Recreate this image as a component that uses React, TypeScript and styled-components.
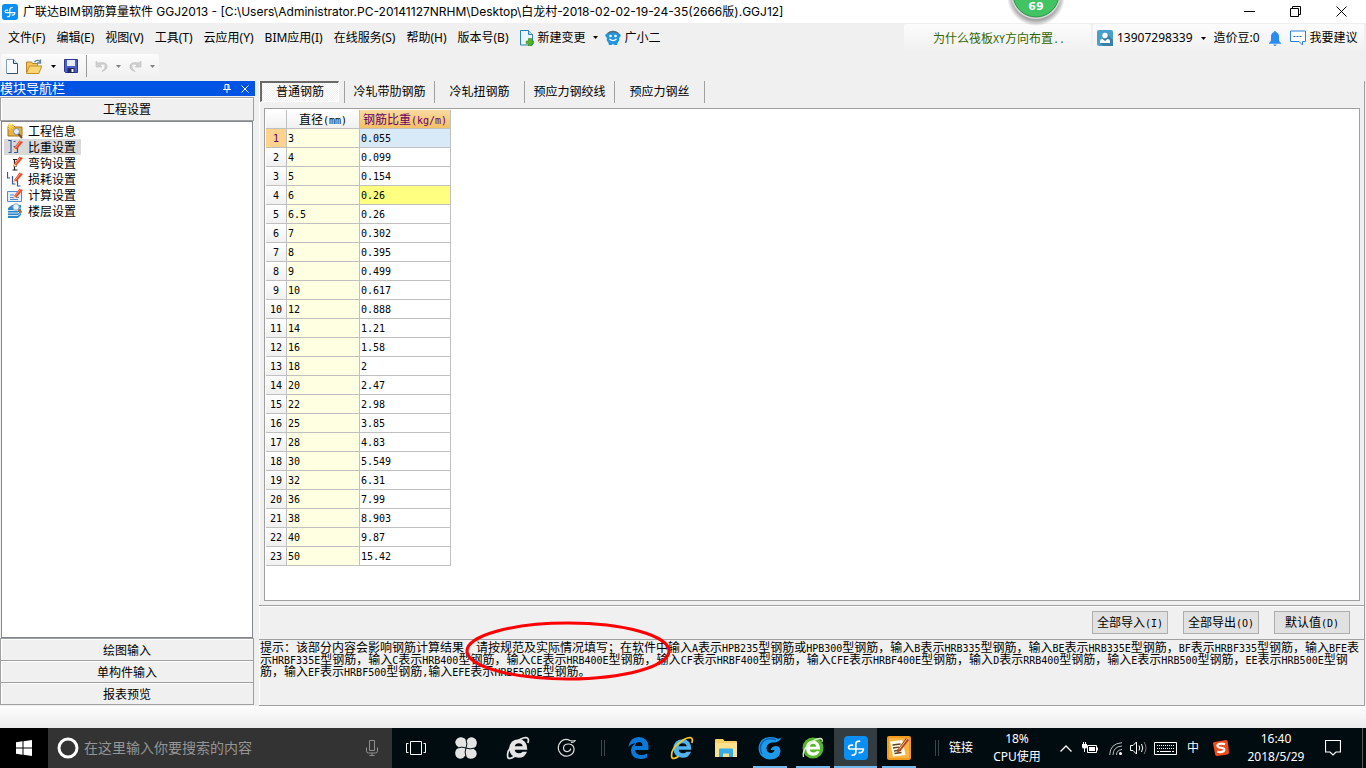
import React from 'react';
import styled, { createGlobalStyle, css } from 'styled-components';

const ui = '"Noto Sans", "Open Sans", "Noto Sans CJK SC", sans-serif';
const song = '"Noto Sans CJK SC", "Liberation Sans", sans-serif';

const GlobalStyle = createGlobalStyle`
  *, *::before, *::after { box-sizing: border-box; }
  body { margin: 0; background: #f0f0f0; color: #000; font: 12px/16px ${song}; }
  button, input { font: inherit; color: inherit; }
  svg { display: block; flex: none; }
`;

const PlainButton = styled.button`
  display: flex;
  align-items: center;
  padding: 0;
  border: 0;
  background: none;
  white-space: nowrap;
`;

const Page = styled.div`
  display: flex;
  flex-direction: column;
  min-height: 100vh;
`;

/* ---------- half-width latin runs ---------- */

const Half = styled.span`
  font-family: "DejaVu Sans Mono", monospace;
  font-size: 10px;
  line-height: 0;
  white-space: pre;
`;

function Mixed({ text }: { text: string }) {
  return (
    <>
      {text.split(/([\x20-\x7e]+)/).map((part, i) => (i % 2 ? <Half key={i}>{part}</Half> : part))}
    </>
  );
}

/* ---------- title bar ---------- */

const TitleBar = styled.header`
  position: relative;
  display: flex;
  align-items: center;
  height: 23px;
  padding: 0 2px;
  background: #fff;
`;

const Title = styled.h1`
  flex: 1;
  margin: 0 0 0 5px;
  font: 400 12px/23px Inter, "Noto Sans CJK SC", sans-serif;
  white-space: nowrap;
`;

const WindowButton = styled(PlainButton)`
  justify-content: center;
  width: 46px;
  height: 22px;
`;

const Ball = styled.div`
  position: absolute;
  top: 0;
  right: 300px;
  z-index: 2;
`;

const BallCount = styled.span`
  position: absolute;
  top: 0;
  left: 0;
  width: 100%;
  text-align: center;
  color: #fff;
  font: bold 11px/14px "DejaVu Sans", sans-serif;
`;

/* ---------- menu ---------- */

const MenuRow = styled.div`
  display: flex;
  justify-content: space-between;
  height: 29px;
  margin-bottom: 1px;
  padding-right: 2px;
  font-family: ${ui};
`;

const Menu = styled.nav`
  display: flex;
  align-items: center;
  gap: 11px;
  padding-left: 8px;
`;

const MenuItem = styled(PlainButton)`
  gap: 4px;
`;

const MenuExtras = styled.div`
  display: flex;
  align-items: center;
  gap: 7px;
`;

const Account = styled.div`
  display: flex;
  gap: 2px;
  padding-top: 1px;
`;

const soft = css`
  border-radius: 3px;
  background: linear-gradient(#fcfcfc, #f0f0f0);
`;

const Promo = styled.a`
  ${soft}
  display: block;
  width: 187px;
  padding: 0 29px;
  color: #336600;
  font-family: ${song};
  line-height: 27px;
  text-decoration: none;
  white-space: nowrap;
`;

const UserBox = styled.div`
  ${soft}
  display: flex;
  align-items: center;
  gap: 8px;
  width: 271px;
  padding: 0 4px;
`;

/* ---------- toolbar ---------- */

const Toolbar = styled.div`
  ${soft}
  display: flex;
  align-items: center;
  gap: 8px;
  width: 158px;
  height: 24px;
  margin: 1px 0 3px 1px;
  padding-left: 5px;
`;

const ToolSep = styled.span`
  width: 1px;
  height: 22px;
  background: #999;
`;

/* ---------- workspace ---------- */

const Workspace = styled.div`
  display: flex;
  flex: 1;
  gap: 4px;
  padding-right: 1px;
`;

const Sidebar = styled.aside`
  display: flex;
  flex-direction: column;
  width: 255px;
  padding-bottom: 1px;
`;

const SideTitle = styled.div`
  display: flex;
  align-items: center;
  height: 15px;
  padding-right: 1px;
  background: #0054e3;
  color: #fff;
  line-height: 14px;
`;

const SideName = styled.span`
  flex: 1;
  padding-bottom: 2px;
  font-size: 13px;
`;

const SideTool = styled(PlainButton)`
  justify-content: center;
  width: 18px;
`;

const SideSection = styled.button<{ $first?: boolean }>`
  width: 254px;
  height: ${(p) => (p.$first ? 24 : 22)}px;
  margin-top: ${(p) => (p.$first ? 1 : 0)}px;
  padding: 0;
  border: solid #a0a0a0;
  border-width: ${(p) => (p.$first ? '1px' : '0 1px 1px')};
  background: #f0f0f0;
  box-shadow: inset 1px 1px #fff;
  line-height: 20px;
`;

const Tree = styled.ul`
  flex: 1;
  width: 252px;
  margin: 0 0 0 1px;
  padding: 1px 2px;
  border: 1px solid #828790;
  background: #fff;
  list-style: none;
`;

const TreeBottom = styled.div`
  width: 254px;
  height: 1px;
  background: #a0a0a0;
`;

const TreeItem = styled(PlainButton)<{ $active?: boolean }>`
  gap: 5px;
  height: 16px;
  padding: 0 5px 0 3px;
  background: ${(p) => (p.$active ? '#d9d9d9' : 'none')};
  line-height: 16px;
`;

const Main = styled.main`
  display: flex;
  flex: 1;
  flex-direction: column;
  min-width: 0;
  border: solid #a0a0a0;
  border-width: 0 1px 1px 0;
  box-shadow: inset 1px 0 #fff;
`;

const Tabs = styled.div`
  display: flex;
  height: 22px;
  padding-left: 1px;
`;

const TabCell = styled.div<{ $first?: boolean }>`
  display: flex;
  width: ${(p) => (p.$first ? 85 : 90)}px;
  padding: 0 ${(p) => (p.$first ? 5 : 0)}px 1px 0;
  border-right: 1px solid #a0a0a0;
`;

const Tab = styled.button<{ $active?: boolean }>`
  flex: 1;
  padding: 0 0 2px;
  border: 0;
  background: none;
  line-height: 18px;
  ${(p) =>
    p.$active &&
    css`
      border: solid #696969;
      border-width: 2px 1px 1px 2px;
      border-right-color: #fff;
      border-bottom-color: #fff;
      background: repeating-conic-gradient(#fff 0 25%, #f0f0f0 0 50%) 0 0 / 2px 2px;
      line-height: 16px;
    `}
`;

const SheetArea = styled.div`
  flex: 1;
  margin: 5px 4px 4px 5px;
  padding: 1px;
  border: 1px solid #a0a0a0;
  background: #fff;
`;

const Sheet = styled.table`
  border-collapse: separate;
  border-spacing: 0;
  table-layout: fixed;
  width: 185px;
  line-height: 16px;
`;

const cell = css`
  height: 19px;
  border: solid #c0c0c0;
  border-width: 0 1px 1px 0;
  font-weight: 400;
  white-space: nowrap;
`;

const Head = styled.th<{ $active?: boolean }>`
  ${cell}
  padding: 0;
  text-align: center;
  color: ${(p) => (p.$active ? '#660066' : '#000')};
  background: ${(p) =>
    p.$active ? 'linear-gradient(#fbd9a0, #f2c067)' : 'linear-gradient(#fff, #f0f0f0)'};
`;

const RowHead = styled(Head)`
  padding-bottom: 2px;
  ${(p) => p.$active && 'background: #ffd28d;'}
`;

const Cell = styled.td<{ $tone: string }>`
  ${cell}
  padding: 0 0 2px 1px;
  background: ${(p) => p.$tone};
`;

const ActionBar = styled.div`
  display: flex;
  justify-content: flex-end;
  align-items: center;
  gap: 15px;
  height: 35px;
  padding-right: 14px;
  border: solid #a0a0a0;
  border-width: 1px 0;
  box-shadow: inset 0 1px #fff;
`;

const ActionButton = styled.button`
  width: 76px;
  height: 23px;
  padding: 0 0 1px;
  border: 1px solid #adadad;
  background: #e1e1e1;
  line-height: 20px;
  white-space: nowrap;
`;

const Hint = styled.div`
  position: relative;
  height: 65px;
  padding: 1px 2px 0 1px;
`;

const HintText = styled.p`
  margin: 0;
  line-height: 12px;
`;

const Ring = styled.svg`
  position: absolute;
  top: -20px;
  left: 206px;
`;

const StatusStrip = styled.div`
  height: 22px;
  background: linear-gradient(#fdfdfd, #ececec);
`;

/* ---------- taskbar ---------- */

const Taskbar = styled.footer`
  display: flex;
  height: 40px;
  background: #010c11;
  color: #fff;
  font-family: ${ui};
`;

const Start = styled(PlainButton)`
  justify-content: center;
  width: 48px;
  background: #000;
`;

const Search = styled.label`
  display: flex;
  align-items: center;
  gap: 5px;
  width: 344px;
  padding: 0 14px 0 9px;
  background: #333;
`;

const SearchInput = styled.input`
  flex: 1;
  min-width: 0;
  padding: 0;
  border: 0;
  outline: 0;
  background: none;
  font-size: 14px;

  &::placeholder { color: #959595; opacity: 1; }
`;

const Task = styled(PlainButton)<{ $w: number; $open?: boolean; $active?: boolean }>`
  justify-content: center;
  width: ${(p) => p.$w}px;
  background: ${(p) =>
    p.$open ? 'linear-gradient(#76b9ed, #76b9ed) center bottom / 34px 2px no-repeat' : 'none'};
  ${(p) => p.$active && 'background: #333d41; box-shadow: inset 0 -2px #76b9ed;'}
`;

const Grip = styled.span<{ $w: number }>`
  display: flex;
  justify-content: center;
  align-items: center;
  width: ${(p) => p.$w}px;

  &::before {
    content: '';
    width: 4px;
    height: 16px;
    border: solid #3d464a;
    border-width: 0 1px;
  }
`;

const Tray = styled.div`
  display: flex;
  margin-left: auto;
`;

const TrayText = styled.div<{ $w: number }>`
  display: flex;
  flex-direction: column;
  justify-content: center;
  width: ${(p) => p.$w}px;
  line-height: 18px;
  text-align: center;
  white-space: nowrap;
`;

const Corner = styled.span`
  width: 4px;
  margin-left: 10px;
  border-left: 1px solid #5b5b5b;
`;

/* ---------- icons ---------- */

const Caret = ({ color = '#000' }: { color?: string }) => (
  <svg width="5" height="3" viewBox="0 0 5 3"><path d="M0 0h5L2.5 3z" fill={color} /></svg>
);

const AppIcon = ({ size }: { size: number }) => (
  <svg width={size} height={size} viewBox="0 0 24 24">
    <rect width="24" height="24" rx="4" fill="#0c8ff2" />
    <g fill="none" stroke="#fff" strokeWidth="1.7" strokeLinecap="round">
      <path d="M15.500 5.200Q11.800 5.200 11.800 8.500V16Q11.800 19.200 8.300 19.200" />
      <path d="M8.500 9.200Q4.600 8.800 4.600 11.400Q4.600 13 6.600 13H19.300Q19.300 16.800 15.300 16.600" />
    </g>
  </svg>
);

const NewIcon = () => (
  <svg width="12" height="15" viewBox="0 0 12 15">
    <path d="M.5.5h7l4 4v10H.5z" fill="#f7fbff" stroke="#8aa0b2" />
    <path d="M7.500.5v4h4" fill="#cfe0ee" stroke="#2d4a63" />
    <path d="M11.500 5v9.500H1" fill="none" stroke="#31536e" />
  </svg>
);

const OpenIcon = () => (
  <svg width="17" height="15" viewBox="0 0 17 15">
    <path d="M.5 13.500V3h5l1 1.500h5V7" fill="#f2c65c" stroke="#b58423" />
    <path d="M.5 14.500 3.500 7h12.300l-3 7.500z" fill="#fbd774" stroke="#c28f2a" />
    <path d="M8.500 3q3-3 5.500-.5M14.500.5V4H11" fill="none" stroke="#5d83a8" strokeWidth="1.300" />
  </svg>
);

const SaveIcon = () => (
  <svg width="14" height="14" viewBox="0 0 14 14">
    <path d="M.5.5h13v13h-12l-1-1z" fill="#4c5fc9" stroke="#2b3592" />
    <path d="M3 1h8v6H3z" fill="#e6ebfa" />
    <path d="M3.500 9h7v5h-7z" fill="#20285f" />
    <path d="M7.500 10h2v3h-2z" fill="#fff" />
  </svg>
);

const UndoIcon = ({ flip }: { flip?: boolean }) => (
  <svg width="13" height="12" viewBox="0 0 13 12">
    <g transform={flip ? 'matrix(-1 0 0 1 13 0)' : undefined}>
      <path d="M1 1v6h6L5 5q4-2 5 .5T7 11.500q6-2 5-6T3 3z" fill="#d0d0d0" stroke="#bcbcbc" strokeWidth=".6" />
    </g>
  </svg>
);

const ChangeIcon = () => (
  <svg width="14" height="16" viewBox="0 0 14 16">
    <path d="M.5.5h8l4 4v10.500H.5z" fill="#eaf5fc" stroke="#2a83b3" />
    <path d="M8.500.5v4h4" fill="#b9dcf0" stroke="#2a83b3" />
    <path d="M8.500 8.500h3V11h2.300v2.600h-2.300V16h-3v-2.400H6.200V11h2.300z" fill="#55b71e" stroke="#2f8410" strokeWidth=".6" />
  </svg>
);

const MascotIcon = () => (
  <svg width="16" height="15" viewBox="0 0 16 15">
    <path d="M3 3Q8-1.500 13 3l2 1q1.500 1.500 0 3l-1 1q1 3-1 4l-1 3H9.500L8 14l-1.500 1H4l-1-3Q1 11 2 8L1 7Q-.5 5 1 4z" fill="#2196e0" />
    <path d="M2.500 3.500Q8-.5 13.500 3.500" fill="none" stroke="#5e6b75" strokeWidth="1.400" />
    <circle cx="5.500" cy="6" r="1.300" fill="#fff" />
    <circle cx="10.500" cy="6" r="1.300" fill="#fff" />
    <path d="M4.500 9q3.500 3.200 7 0" fill="none" stroke="#fff" strokeWidth="1.200" />
  </svg>
);

const UserIcon = () => (
  <svg width="16" height="16" viewBox="0 0 16 16">
    <rect width="16" height="16" rx="2" fill="#4aa0cc" />
    <path d="M10 4l6 6v6H6l-3-3z" fill="#397fa8" />
    <circle cx="8" cy="5.500" r="2.700" fill="#fff" />
    <path d="M3 13v-2q0-2 2.500-2L8 11l2.500-2Q13 9 13 11v2z" fill="#fff" />
  </svg>
);

const BellIcon = () => (
  <svg width="14" height="15" viewBox="0 0 14 15">
    <path d="M7 0q1 0 1 1 3 1 3 4.500V9q0 1.500 2 3v.8H1V12q2-1.500 2-3V5.500Q3 2 6 1q0-1 1-1zM5.300 13.500h3.400Q8 15 7 15t-1.700-1.500z" fill="#2a8cf0" />
  </svg>
);

const TalkIcon = () => (
  <svg width="16" height="16" viewBox="0 0 16 16">
    <path d="M.5 1h15v10.500h-3V15L9 11.500H.5z" fill="#fff" stroke="#2a7fe0" />
    <path d="M3.500 6.500h9" stroke="#2a5fa8" strokeDasharray="2 1" />
  </svg>
);

const Pencil = () => (
  <g>
    <path d="M7 9 12.500 1.500 16 3 9.500 10.500l-3 1z" fill="#ea4a2c" />
    <path d="M8.500 8.700 13.500 2.200" stroke="#ff9d80" />
    <path d="M6 12 7 9l2.700 1.500z" fill="#f5d7a2" />
  </g>
);

const treeArt: Record<string, React.ReactNode> = {
  info: (
    <>
      <path d="M1 3h6l1 1h7v9H1z" fill="#e9b13f" stroke="#a8731a" />
      <path d="M3 0v7M0 3.500h7M1 1l5 5M6 1 1 6" stroke="#ffd84a" />
      <circle cx="9.500" cy="8.500" r="3" fill="#dff0fd" stroke="#6d91b5" />
      <path d="m11.500 11 3.500 4" stroke="#7a4b25" strokeWidth="2" />
    </>
  ),
  weight: (
    <>
      <path d="M1 1.500h3V13.500H1.500M6.500 2.500h2M6.500 7.500h4V13.500H7" fill="none" stroke="#35589a" strokeWidth="1.200" />
      <Pencil />
    </>
  ),
  hook: (
    <>
      <path d="M6 4.500h4M7.500 4.500V15M5.500 15h5M6 11h4" fill="none" stroke="#222" strokeWidth="1.200" />
      <Pencil />
    </>
  ),
  loss: (
    <>
      <path d="M.5 1v6H3M5.500 5v8h3M10.500 9v6h3" fill="none" stroke="#35589a" strokeWidth="1.200" />
      <Pencil />
    </>
  ),
  calc: (
    <>
      <path d="M.5 4.500h14v10H.5z" fill="#e3eefb" stroke="#5a8ac6" />
      <path d="M3 8h4M3 10.500h9M3 12.500h8" stroke="#5a8ac6" />
      <Pencil />
    </>
  ),
  floor: (
    <>
      <path d="M1 5 5 2h9v10l-3 3H1z" fill="#2e86c8" />
      <path d="M1 7.500h10l3-3M1 10h10l3-3M1 12.500h10l3-3" fill="none" stroke="#cfe8fa" />
      <circle cx="9" cy="4" r="3.200" fill="#e4f2fd" stroke="#8aa8c2" />
      <path d="m11.500 6.500 3 3" stroke="#b0622c" strokeWidth="2" />
    </>
  ),
};

const stroke = { fill: 'none', stroke: '#fff', strokeWidth: 1 };

const WindowsLogo = () => (
  <svg width="16" height="16" viewBox="0 0 16 16">
    <path d="M0 2.200 6.500 1.300V7.500H0zM7.500 1.200 16 0v7.500H7.500zM0 8.500h6.500v6.200L0 13.800zM7.500 8.500H16V16l-8.500-1.200z" fill="#fff" />
  </svg>
);

const MicIcon = () => (
  <svg width="12" height="16" viewBox="0 0 12 16">
    <path d="M3.500.5h5v10h-5zM.5 7.500V11q0 2 2 2h7q2 0 2-2V7.500M6 13v2.500M3.500 15.500h5" fill="none" stroke="#8f8f8f" />
  </svg>
);

const TaskView = () => (
  <svg width="20" height="14" viewBox="0 0 20 14">
    <path d="M4.500.5h11v13h-11zM2.500 2.500h-2v9h2M17.500 2.500h2v9h-2" {...stroke} />
  </svg>
);

const Petals = () => (
  <svg width="22" height="22" viewBox="0 0 22 22">
    <g fill="#e4e4e4">
      {[0, 90, 180, 270].map((a) => (
        <path key={a} transform={`rotate(${a} 11 11)`} d="M11 11Q7.500 12 3.500 10.300-.5 8 .5 4 2 0 6.500.2q5 .8 5.500 5.300Q12 9 11 11z" />
      ))}
    </g>
    {[0, 90, 180, 270].map((a) => (
      <path key={a} transform={`rotate(${a} 11 11)`} d="M11 11Q12.800 7 11 2.500L10.800 0" fill="none" stroke="#010c11" strokeWidth="1" />
    ))}
  </svg>
);

const IeIcon = ({ body, ring }: { body: string; ring: string }) => (
  <svg width="24" height="24" viewBox="1 1 22.500 22.500">
    <path d="M21 14H9.200q.3 3.200 3.800 3.200 2.500 0 3.500-1.500h4.200Q18.500 21.500 12.800 21.500 4.300 21 4 12.800 4.500 4.500 12.800 4q8.500.5 8.200 10zM9.200 10.700h7.500q-.5-3-3.700-3T9.200 10.700z" fill={body} />
    <path d="M21.500 7.500Q23 3 20 2.500 16 2 9 8T2.500 19q-.3 3.500 2.500 3 2-.5 4-2" fill="none" stroke={ring} strokeWidth="1.600" />
  </svg>
);

const SwirlIcon = () => (
  <svg width="20" height="20" viewBox="0 0 20 20">
    <path d="M18.500 2.500Q16 3.500 13 2.500 8-.2 4 3.500-.2 8 2 13q3 6 9 5 6.500-1.500 6-7.500-.5-4-5-4.500-5-.2-5.500 3.500 0 4.500 4.500 4 3-.8 2.500-3" fill="none" stroke="#e0e0e0" strokeWidth="1.200" />
    <path d="M18.500 2.500Q17 5 14 4.500" fill="none" stroke="#e0e0e0" />
  </svg>
);

const EdgeIcon = () => (
  <svg width="21" height="22" viewBox="0 0 21 22">
    <path d="M.5 10Q2 0 11 0q9 .5 9.500 9.500V13H7q.5 5 6.500 5 3 0 5.500-1.500V20.500Q16 22 12 22 3.500 21.500 3 14q0-5 4.500-8Q3 6.500.5 10zM7 9h7.500q0-4-3.500-4T7 9z" fill="#0a78d7" />
  </svg>
);

const FolderIcon = () => (
  <svg width="22" height="18" viewBox="0 0 22 18">
    <path d="M0 1q0-1 1-1h7l1.500 2H21q1 0 1 1v15H0z" fill="#f5d166" />
    <path d="M0 4h22v14H0z" fill="#fce08c" />
    <path d="M4 18v-7.500q0-1 1-1h12q1 0 1 1V18h-4v-3.500H8V18z" fill="#35abe8" />
  </svg>
);

const GIcon = () => (
  <svg width="24" height="24" viewBox="0 0 24 24">
    <path d="M23.500 1.500Q21.500 6 16.500 6.500 9 6 8.500 12q0 4.500 4 5 3.500 0 4-3h-4q1-3.500 5-4 4.500 0 5 5-1 8.500-10.500 8.500Q1 22.500.5 12 1.500 1.500 12 1q5 0 7 1.500 3 .5 4.500-1z" fill="#1c9bea" />
    <path d="M4 18Q0 10 5.500 5 10 1 18 4" fill="none" stroke="#0b63b8" strokeWidth="1.500" />
  </svg>
);

const GreenBrowser = () => (
  <svg width="24" height="24" viewBox="0 0 24 24">
    <circle cx="12" cy="12" r="10.500" fill="#55b82c" />
    <path d="M19 13.500H8.800q.3 3 3.500 3 2 0 3-1.300h3.200Q17 19.800 12 19.800 5.200 19.300 5 12.200T12 4.500q7 .5 7 9zM8.800 10.700h6.500Q14.800 7.800 12 7.800t-3.200 2.900z" fill="#fff" />
    <path d="M21 6q1-3.500-2-3.500Q13 3 7 9t-4.500 12" fill="none" stroke="#d9f2c6" strokeWidth="1.300" />
  </svg>
);

const NoteIcon = () => (
  <svg width="24" height="24" viewBox="0 0 24 24">
    <rect width="24" height="24" rx="2" fill="#f39a1d" />
    <path d="M2 2h20v20H2z" fill="#f8b444" />
    <path d="M3 5.500 15.500 4l3 15L6 20.500z" fill="#fffbe8" />
    <path d="m5.500 9 8-1M6 12l6-.8M7 15l7-1M7.500 17.500l7-1" stroke="#5d4526" strokeWidth="1.300" />
    <path d="M10.500 13.500 19 2l3 2-8.500 11-3.500 2z" fill="#b3401c" />
    <path d="M12 13.500 20 3" stroke="#f7c28b" />
  </svg>
);

/* ---------- data ---------- */

const menus = ['文件(F)', '编辑(E)', '视图(V)', '工具(T)', '云应用(Y)', 'BIM应用(I)', '在线服务(S)', '帮助(H)', '版本号(B)'];

const tree = [
  ['info', '工程信息'],
  ['weight', '比重设置'],
  ['hook', '弯钩设置'],
  ['loss', '损耗设置'],
  ['calc', '计算设置'],
  ['floor', '楼层设置'],
];

const tabs = ['普通钢筋', '冷轧带肋钢筋', '冷轧扭钢筋', '预应力钢绞线', '预应力钢丝'];

const rows = [
  ['3', '0.055'], ['4', '0.099'], ['5', '0.154'], ['6', '0.26'], ['6.5', '0.26'], ['7', '0.302'],
  ['8', '0.395'], ['9', '0.499'], ['10', '0.617'], ['12', '0.888'], ['14', '1.21'], ['16', '1.58'],
  ['18', '2'], ['20', '2.47'], ['22', '2.98'], ['25', '3.85'], ['28', '4.83'], ['30', '5.549'],
  ['32', '6.31'], ['36', '7.99'], ['38', '8.903'], ['40', '9.87'], ['50', '15.42'],
];

const tone = (i: number) => (i === 0 ? '#d8e9f8' : i === 3 ? '#ffff80' : '#fff');

const hint =
  '提示：该部分内容会影响钢筋计算结果，请按规范及实际情况填写；在软件中输入A表示HPB235型钢筋或HPB300型钢筋，输入B表示HRB335型钢筋，输入BE表示HRB335E型钢筋，BF表示HRBF335型钢筋，输入BFE表示HRBF335E型钢筋，输入C表示HRB400型钢筋，输入CE表示HRB400E型钢筋，输入CF表示HRBF400型钢筋，输入CFE表示HRBF400E型钢筋，输入D表示RRB400型钢筋，输入E表示HRB500型钢筋，EE表示HRB500E型钢筋，输入EF表示HRBF500型钢筋,输入EFE表示HRBF500E型钢筋。';

/* ---------- page ---------- */

export default function App() {
  return (
    <Page>
      <GlobalStyle />
      <TitleBar>
        <AppIcon size={16} />
        <Title>广联达BIM钢筋算量软件 GGJ2013 - [C:\Users\Administrator.PC-20141127NRHM\Desktop\白龙村-2018-02-02-19-24-35(2666版).GGJ12]</Title>
        <WindowButton aria-label="最小化">
          <svg width="11" height="11" viewBox="0 0 11 11"><path d="M0 5.500h11" stroke="#000" /></svg>
        </WindowButton>
        <WindowButton aria-label="还原">
          <svg width="11" height="11" viewBox="0 0 11 11"><path d="M.5 2.500h8v8h-8zM2.500 2.500v-2h8v8h-2" fill="none" stroke="#000" /></svg>
        </WindowButton>
        <WindowButton aria-label="关闭">
          <svg width="11" height="11" viewBox="0 0 11 11"><path d="m.5.5 10 10m0-10-10 10" stroke="#000" /></svg>
        </WindowButton>
        <Ball>
          <svg width="60" height="26" viewBox="0 0 60 26">
            <defs>
              <radialGradient id="shade" cx="30" cy="-3" r="29" gradientUnits="userSpaceOnUse">
                <stop offset=".8" stopColor="#000" stopOpacity=".35" />
                <stop offset="1" stopColor="#000" stopOpacity="0" />
              </radialGradient>
            </defs>
            <circle cx="30" cy="-3" r="29" fill="url(#shade)" />
            <circle cx="30" cy="-6" r="25" fill="#d8d8d8" />
            <circle cx="30" cy="-6" r="23" fill="#43c463" stroke="#2c8f48" />
          </svg>
          <BallCount>69</BallCount>
        </Ball>
      </TitleBar>

      <MenuRow>
        <Menu>
          {menus.map((m) => <MenuItem key={m}>{m}</MenuItem>)}
          <MenuExtras>
            <MenuItem><ChangeIcon />新建变更</MenuItem>
            <Caret />
            <MenuItem><MascotIcon />广小二</MenuItem>
          </MenuExtras>
        </Menu>
        <Account>
          <Promo href="#"><Mixed text="为什么筏板XY方向布置.." /></Promo>
          <UserBox>
            <MenuItem><UserIcon />13907298339</MenuItem>
            <Caret />
            <span>造价豆:0</span>
            <BellIcon />
            <MenuItem><TalkIcon />我要建议</MenuItem>
          </UserBox>
        </Account>
      </MenuRow>

      <Toolbar>
        <PlainButton aria-label="新建"><NewIcon /></PlainButton>
        <PlainButton aria-label="打开"><OpenIcon /></PlainButton>
        <Caret />
        <PlainButton aria-label="保存"><SaveIcon /></PlainButton>
        <ToolSep />
        <PlainButton aria-label="撤销"><UndoIcon /></PlainButton>
        <Caret color="#808080" />
        <PlainButton aria-label="重做"><UndoIcon flip /></PlainButton>
        <Caret color="#808080" />
      </Toolbar>

      <Workspace>
        <Sidebar>
          <SideTitle>
            <SideName>模块导航栏</SideName>
            <SideTool aria-label="固定">
              <svg width="8" height="9" viewBox="0 0 8 9"><path d="M2 5V.5h4V5M5 1v4M0 5.500h8M4 6v3" fill="none" stroke="#fff" /></svg>
            </SideTool>
            <SideTool aria-label="关闭导航">
              <svg width="8" height="8" viewBox="0 0 8 8"><path d="m.5.5 7 7m0-7-7 7" stroke="#fff" /></svg>
            </SideTool>
          </SideTitle>
          <SideSection $first>工程设置</SideSection>
          <Tree>
            {tree.map(([icon, label]) => (
              <li key={label}>
                <TreeItem $active={icon === 'weight'}>
                  <svg width="16" height="16" viewBox="0 0 16 16">{treeArt[icon]}</svg>
                  {label}
                </TreeItem>
              </li>
            ))}
          </Tree>
          <TreeBottom />
          <SideSection>绘图输入</SideSection>
          <SideSection>单构件输入</SideSection>
          <SideSection>报表预览</SideSection>
        </Sidebar>

        <Main>
          <Tabs role="tablist">
            {tabs.map((t, i) => (
              <TabCell key={t} $first={i === 0}>
                <Tab role="tab" aria-selected={i === 0} $active={i === 0}>{t}</Tab>
              </TabCell>
            ))}
          </Tabs>
          <SheetArea>
            <Sheet>
              <colgroup>
                <col style={{ width: 21 }} />
                <col style={{ width: 73 }} />
                <col style={{ width: 91 }} />
              </colgroup>
              <thead>
                <tr>
                  <Head />
                  <Head><Mixed text="直径(mm)" /></Head>
                  <Head $active><Mixed text="钢筋比重(kg/m)" /></Head>
                </tr>
              </thead>
              <tbody>
                {rows.map(([d, w], i) => (
                  <tr key={d}>
                    <RowHead scope="row" $active={i === 0}><Mixed text={String(i + 1)} /></RowHead>
                    <Cell $tone="#ffffe1"><Mixed text={d} /></Cell>
                    <Cell $tone={tone(i)}><Mixed text={w} /></Cell>
                  </tr>
                ))}
              </tbody>
            </Sheet>
          </SheetArea>
          <ActionBar>
            <ActionButton><Mixed text="全部导入(I)" /></ActionButton>
            <ActionButton><Mixed text="全部导出(O)" /></ActionButton>
            <ActionButton><Mixed text="默认值(D)" /></ActionButton>
          </ActionBar>
          <Hint>
            <HintText><Mixed text={hint} /></HintText>
            <Ring width="206" height="62" viewBox="0 0 206 62">
              <ellipse cx="103" cy="31" rx="101" ry="28" fill="none" stroke="#f00" strokeWidth="3" />
            </Ring>
          </Hint>
        </Main>
      </Workspace>
      <StatusStrip />

      <Taskbar>
        <Start aria-label="开始"><WindowsLogo /></Start>
        <Search>
          <svg width="22" height="22" viewBox="0 0 22 22"><circle cx="11" cy="11" r="9" fill="none" stroke="#fff" strokeWidth="3" /></svg>
          <SearchInput placeholder="在这里输入你要搜索的内容" />
          <MicIcon />
        </Search>
        <Task $w={48} aria-label="任务视图"><TaskView /></Task>
        <Task $w={52} aria-label="应用"><Petals /></Task>
        <Task $w={52} aria-label="浏览器"><IeIcon body="#e6e6e6" ring="#e6e6e6" /></Task>
        <Task $w={46} aria-label="广联达"><SwirlIcon /></Task>
        <Grip $w={26} />
        <Task $w={44} aria-label="Edge"><EdgeIcon /></Task>
        <Task $w={44} aria-label="Internet Explorer"><IeIcon body="#4db4f0" ring="#f3c92b" /></Task>
        <Task $w={44} aria-label="文件资源管理器"><FolderIcon /></Task>
        <Task $w={43} $open aria-label="广联达服务"><GIcon /></Task>
        <Task $w={43} $open aria-label="安全浏览器"><GreenBrowser /></Task>
        <Task $w={43} $active aria-label="钢筋算量"><AppIcon size={24} /></Task>
        <Task $w={43} $open aria-label="笔记"><NoteIcon /></Task>
        <Tray>
          <Grip $w={10} />
          <TrayText $w={38}>链接</TrayText>
          <TrayText $w={74}><span>18%</span><span>CPU使用</span></TrayText>
          <Task $w={24} aria-label="显示隐藏的图标">
            <svg width="12" height="7" viewBox="0 0 12 7"><path d="m.5 6.500 5.500-5.500 5.500 5.500" {...stroke} strokeWidth={1.300} /></svg>
          </Task>
          <Task $w={24} aria-label="电源">
            <svg width="16" height="12" viewBox="0 0 16 12">
              <path d="M5.500 3.500h9v7h-9z" {...stroke} />
              <path d="M7 5h6v4H7zM15 5.500h1v3h-1zM0 2h5v3q0 1.500-2 1.500V10H2V6.500Q0 6.500 0 5zM1 0h1v2H1zM3 0h1v2H3z" fill="#fff" />
            </svg>
          </Task>
          <Task $w={26} aria-label="网络">
            <svg width="13" height="13" viewBox="0 0 13 13">
              <path d="M.7 13Q1 1.500 13 .7M4 13q.2-8.500 9-9M7.500 13q0-5 5.500-5.500" {...stroke} stroke="#bdbdbd" />
              <circle cx="11.500" cy="11.500" r="1.500" fill="#fff" />
            </svg>
          </Task>
          <Task $w={20} aria-label="音量">
            <svg width="17" height="14" viewBox="0 0 17 14">
              <path d="M.5 4.500H3L6.500 1v12L3 9.500H.5zM9 4.500q1.500 2.500 0 5M11.500 3q2.500 4 0 8" {...stroke} />
              <path d="M14 1q4 6 0 12" {...stroke} stroke="#777" />
            </svg>
          </Task>
          <Task $w={34} aria-label="触摸键盘">
            <svg width="23" height="13" viewBox="0 0 23 13">
              <path d="M.5.5h22v12H.5z" {...stroke} />
              <path d="M3 3.500h17M3 6.500h17" {...stroke} strokeDasharray="1 1" />
              <path d="M3 9.500h2M6 9.500h11M18 9.500h2" {...stroke} />
            </svg>
          </Task>
          <TrayText $w={22}>中</TrayText>
          <Task $w={34} aria-label="输入法">
            <svg width="16" height="16" viewBox="0 0 16 16">
              <path d="M1.500 2 13 0q1.500 0 1.800 1.500L16 12.500q0 1.500-1.500 2L4 16q-1.500 0-1.800-1.500L0 3.500Q0 2.200 1.500 2z" fill="#f04c1a" />
              <path d="M12 4.200Q9 3 6 4T5.500 7.300L10 8.300q2.200 1 .8 2.700-2.800 2-6.600.5" fill="none" stroke="#fff" strokeWidth="2.200" />
            </svg>
          </Task>
          <TrayText $w={76}><span>16:40</span><span>2018/5/29</span></TrayText>
          <Task $w={38} aria-label="通知">
            <svg width="16" height="16" viewBox="0 0 16 16"><path d="M.5.5h15v11.500H11L8 15l-3-3H.5z" {...stroke} strokeWidth={1.200} /></svg>
          </Task>
          <Corner />
        </Tray>
      </Taskbar>
    </Page>
  );
}
